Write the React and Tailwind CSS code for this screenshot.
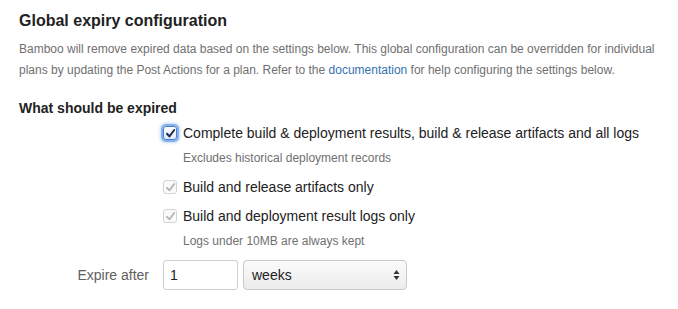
import React from "react";

function Check({ focused }) {
  if (focused) {
    return (
      <span className="flex h-[14px] w-[14px] shrink-0 items-center justify-center rounded-[3px] border border-[#3f7fd6] bg-gradient-to-b from-[#ffffff] to-[#dfe9f7] shadow-[0_0_0_2px_rgba(80,140,220,0.55),0_0_3px_3px_rgba(80,140,220,0.35)]">
        <svg width="11" height="11" viewBox="0 0 11 11">
          <path d="M2 5.8 L4.4 8.4 L9.2 2" fill="none" stroke="#1d2a55" strokeWidth="2" strokeLinecap="round" strokeLinejoin="round" />
        </svg>
      </span>
    );
  }
  return (
    <span className="flex h-[14px] w-[14px] shrink-0 items-center justify-center rounded-[3px] border border-[#d4d4d4] bg-[#fafafa]">
      <svg width="11" height="11" viewBox="0 0 11 11">
        <path d="M2 5.8 L4.4 8.4 L9.2 2" fill="none" stroke="#b4b4b4" strokeWidth="1.8" strokeLinecap="round" strokeLinejoin="round" />
      </svg>
    </span>
  );
}

function Option({ label, note, focused }) {
  return (
    <div className="flex flex-col">
      <label className="flex h-[20px] items-center gap-[6px] text-[14px] text-[#222]">
        <Check focused={focused} />
        <span>{label}</span>
      </label>
      {note && <div className="mt-[5px] pl-[20px] text-[12px] leading-[20px] text-[#707070]">{note}</div>}
    </div>
  );
}

export default function App() {
  return (
    <div className="min-h-screen bg-white pl-[19px] pr-[20px] pt-[10px] font-['Liberation_Sans',Arial,sans-serif]">
      <h2 className="text-[16px] font-bold leading-[22px] text-[#222]">Global expiry configuration</h2>
      <p className="mt-[7px] text-[12px] leading-[21px] text-[#707070]">
        <span>Bamboo will remove expired data based on the settings below. This global configuration can be overridden for individual</span>
        <br />
        <span>plans by updating the Post Actions for a plan. Refer to the </span>
        <a className="text-[#3572b0]" href="#">documentation</a>
        <span> for help configuring the settings below.</span>
      </p>
      <h3 className="mt-[17px] text-[14px] font-bold leading-[20px] text-[#222]">What should be expired</h3>

      <div className="mt-[5px] flex flex-col gap-[9px] pl-[144px]">
        <Option focused label="Complete build & deployment results, build & release artifacts and all logs" note="Excludes historical deployment records" />
        <Option label="Build and release artifacts only" />
        <Option label="Build and deployment result logs only" note="Logs under 10MB are always kept" />
      </div>

      <div className="mt-[9px] flex items-center">
        <label className="w-[130px] text-right text-[14px] text-[#606060]">Expire after</label>
        <div className="ml-[14px] flex h-[30px] w-[75px] items-center rounded-[3px] border border-[#cfcfcf] bg-white px-[6px] text-[14px] text-[#222]">1</div>
        <div className="ml-[5px] flex h-[30px] w-[164px] items-center justify-between rounded-[4px] border border-[#c8c8c8] bg-gradient-to-b from-[#fbfbfb] to-[#ececec] pl-[8px] pr-[6px] text-[14px] text-[#222]">
          <span>weeks</span>
          <svg width="7" height="12" viewBox="0 0 7 12">
            <path d="M0.5 5 L3.5 1 L6.5 5 Z" fill="#333" />
            <path d="M0.5 7 L3.5 11 L6.5 7 Z" fill="#333" />
          </svg>
        </div>
      </div>
    </div>
  );
}
